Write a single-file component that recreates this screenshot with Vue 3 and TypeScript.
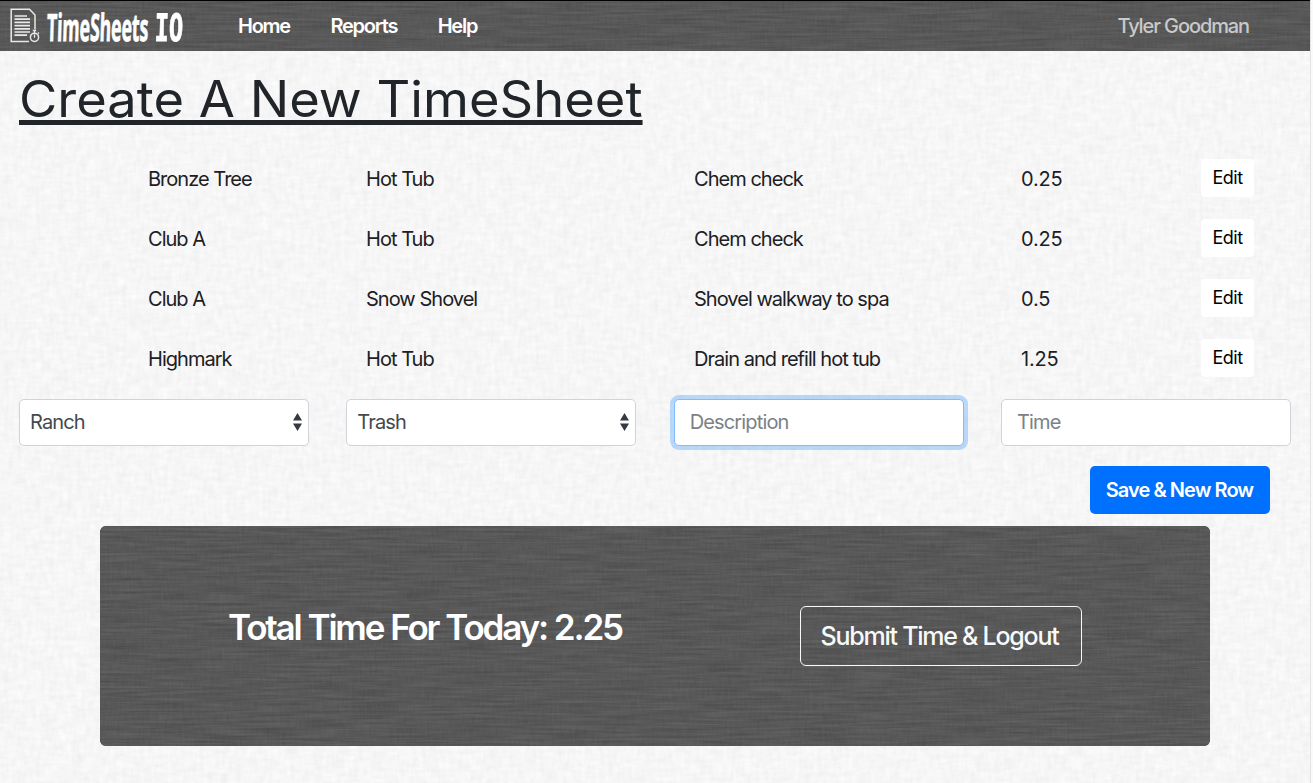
<script setup lang="ts">
interface Entry {
  place: string
  task: string
  description: string
  hours: string
}

const links: string[] = ['Home', 'Reports', 'Help']

const entries: Entry[] = [
  { place: 'Bronze Tree', task: 'Hot Tub', description: 'Chem check', hours: '0.25' },
  { place: 'Club A', task: 'Hot Tub', description: 'Chem check', hours: '0.25' },
  { place: 'Club A', task: 'Snow Shovel', description: 'Shovel walkway to spa', hours: '0.5' },
  { place: 'Highmark', task: 'Hot Tub', description: 'Drain and refill hot tub', hours: '1.25' },
]
</script>

<template>
  <div class="page">
    <svg class="texture" aria-hidden="true">
      <filter id="paper" x="0" y="0" width="100%" height="100%" color-interpolation-filters="sRGB">
        <feTurbulence type="fractalNoise" baseFrequency="0.07 0.22" numOctaves="2" seed="4" result="h" />
        <feTurbulence type="fractalNoise" baseFrequency="0.22 0.07" numOctaves="2" seed="9" result="v" />
        <feComposite in="h" in2="v" operator="arithmetic" k2="0.5" k3="0.5" />
        <feColorMatrix values="0.09 0 0 0 0.919  0.09 0 0 0 0.919  0.09 0 0 0 0.919  0 0 0 0 1" />
      </filter>
      <filter id="linen" x="0" y="0" width="100%" height="100%" color-interpolation-filters="sRGB">
        <feTurbulence type="fractalNoise" baseFrequency="0.02 0.4" numOctaves="3" seed="2" result="h" />
        <feTurbulence type="fractalNoise" baseFrequency="0.4 0.08" numOctaves="2" seed="6" result="v" />
        <feComposite in="h" in2="v" operator="arithmetic" k2="0.75" k3="0.25" />
        <feColorMatrix values="0.14 0 0 0 0.275  0.14 0 0 0 0.275  0.14 0 0 0 0.275  0 0 0 0 1" />
      </filter>
      <rect width="100%" height="100%" filter="url(#paper)" />
    </svg>

    <header class="navbar">
      <svg class="texture" aria-hidden="true">
        <rect width="100%" height="100%" filter="url(#linen)" />
      </svg>
      <a class="brand">
        <svg class="brand-icon" viewBox="0 0 30 36" fill="none" stroke="#e8e8e8">
          <path d="M19 33.5H1.2V1.2H19.5L25 7V21.5" stroke-width="1.5" />
          <path d="M4.5 8H17M4.5 11.2H20M4.5 14.4H20M4.5 17.6H20M4.5 20.8H20M4.5 24H20M4.5 27.2H17" stroke-width="1.7" />
          <circle cx="24.5" cy="29.3" r="4.1" stroke-width="1.5" />
          <path d="M24.5 29.8V26.5M24.5 25V22.5M22.8 22.5H26.2M28 25.5L29 24.5" stroke-width="1.3" />
        </svg>
        <span class="brand-name"><span class="brand-text">TimeSheets <span class="brand-suffix">IO</span></span></span>
      </a>
      <nav class="links">
        <a v-for="link in links" :key="link">{{ link }}</a>
      </nav>
      <span class="user">Tyler Goodman</span>
    </header>

    <main class="content">
      <h1><span class="title">Create A New TimeSheet</span></h1>

      <section class="entries">
        <div v-for="(entry, i) in entries" :key="i" class="entry">
          <span>{{ entry.place }}</span>
          <span>{{ entry.task }}</span>
          <span>{{ entry.description }}</span>
          <span class="hours">{{ entry.hours }}</span>
          <button type="button" class="edit">Edit</button>
        </div>
      </section>

      <form class="fields" @submit.prevent>
        <div v-for="choice in ['Ranch', 'Trash']" :key="choice" class="field select">
          <span>{{ choice }}</span>
          <svg class="arrows" width="9" height="18" viewBox="0 0 9 18" fill="#343a40">
            <path d="M4.5 0L9 7.5H0ZM4.5 18L0 10.5H9Z" />
          </svg>
        </div>
        <input class="field input focused" placeholder="Description" />
        <input class="field input" placeholder="Time" />
      </form>

      <div class="actions">
        <button type="button" class="save">Save &amp; New Row</button>
      </div>

      <section class="summary">
        <svg class="texture" aria-hidden="true">
          <rect width="100%" height="100%" filter="url(#linen)" />
        </svg>
        <h2>Total Time For Today: 2.25</h2>
        <button type="button" class="submit">Submit Time &amp; Logout</button>
      </section>
    </main>
  </div>
</template>

<style>
body {
  margin: 0;
  background: #fafafa;
  overflow: hidden;
}
</style>

<style scoped>
* {
  box-sizing: border-box;
}

.page {
  position: relative;
  width: 1311px;
  height: 783px;
  border-right: 1px solid #e4e4e4;
  overflow: hidden;
  isolation: isolate;
  background: #f6f6f6;
  color: #212529;
  font-family: Inter, "Liberation Sans", sans-serif;
  font-size: 20px;
}

.texture {
  position: absolute;
  inset: 0;
  z-index: -1;
  width: 100%;
  height: 100%;
}

button,
input {
  margin: 0;
  font-family: inherit;
}

.navbar {
  position: relative;
  isolation: isolate;
  display: flex;
  align-items: center;
  height: 51px;
  padding: 0 60px 0 10px;
  border-top: 1px solid #000;
  background: #585858;
  color: #fff;
}

.brand {
  display: flex;
  align-items: center;
  width: 228px;
}

.brand-icon {
  width: 30px;
  height: 36px;
}

.brand-name {
  margin-left: 7px;
  width: 134px;
  white-space: nowrap;
}

.brand-text {
  display: inline-block;
  transform: translateY(1px) scale(0.605, 1.3) skewX(-4deg);
  transform-origin: 0 50%;
  font-family: "Open Sans", sans-serif;
  font-size: 29px;
  font-weight: 700;
  line-height: 36px;
  -webkit-text-stroke: 0.7px #fff;
}

.brand-suffix {
  display: inline-block;
  margin-left: 3px;
  font-family: "DejaVu Sans Mono", monospace;
  font-size: 29px;
  line-height: 36px;
  transform: scaleX(1.35);
  transform-origin: 0 50%;
}

.links {
  display: flex;
  flex: 1;
  gap: 40.5px;
  font-weight: 600;
  letter-spacing: -1.25px;
}

.user {
  color: #c9c9c9;
  font-weight: 500;
  letter-spacing: -1.1px;
  margin-right: 1px;
}

.content {
  padding: 0 19px;
}

h1 {
  height: 98px;
  margin: 0;
  padding-top: 18px;
  font-size: 50px;
  font-weight: 400;
  line-height: 60px;
  white-space: nowrap;
}

.title {
  display: inline-block;
  transform: scaleX(1.049);
  transform-origin: 0 50%;
  text-decoration: underline;
  text-decoration-thickness: 5px;
  text-underline-offset: 3px;
  text-decoration-skip-ink: none;
}

.entry {
  display: grid;
  grid-template-columns: 218px 328px 327px 180px 53px;
  align-items: center;
  height: 60px;
  padding-left: 129px;
  color: #1c2024;
  letter-spacing: -0.97px;
}

.hours {
  letter-spacing: -0.2px;
}

.edit {
  height: 38px;
  margin-top: -2px;
  padding: 0 0 1px;
  border: 0;
  border-radius: 4px;
  background: #fff;
  color: #000;
  font-size: 18px;
  letter-spacing: -0.5px;
}

.fields {
  display: grid;
  grid-template-columns: repeat(4, 290px);
  column-gap: 37.33px;
  margin-top: 10px;
}

.field {
  height: 47px;
  border: 1px solid #ced4da;
  border-radius: 5px;
  background: #fff;
  font-size: 20px;
  letter-spacing: -0.85px;
}

.select {
  display: flex;
  align-items: center;
  justify-content: space-between;
  padding: 0 6px 2px 10px;
  color: #42494f;
}

.arrows {
  margin-top: 1px;
}

.input {
  width: 290px;
  padding: 0 15px 2px;
  outline: 0;
}

.input::placeholder {
  color: #7c8187;
  opacity: 1;
}

.focused {
  border-color: #80bdff;
  box-shadow: 0 0 0 4px rgba(0, 123, 255, 0.25);
}

.actions {
  display: flex;
  justify-content: flex-end;
  padding: 20px 21px 12px 0;
}

.save {
  width: 180px;
  height: 48px;
  padding: 0 1px 0 0;
  border: 0;
  border-radius: 5px;
  background: #0070ff;
  color: #fff;
  font-size: 20px;
  font-weight: 600;
  letter-spacing: -0.95px;
}

.summary {
  position: relative;
  isolation: isolate;
  display: flex;
  width: 1110px;
  height: 220px;
  margin-left: 81px;
  overflow: hidden;
  border-radius: 6px;
  background: #585858;
  color: #fff;
}

h2 {
  width: 572px;
  margin: 79px 0 0 128px;
  font-size: 35px;
  font-weight: 600;
  line-height: 44px;
  letter-spacing: -2.2px;
  word-spacing: 0.4px;
}

.submit {
  width: 282px;
  height: 60px;
  margin-top: 80px;
  padding: 0 3px 0 0;
  border: 1px solid #f8f9fa;
  border-radius: 6px;
  background: transparent;
  color: #f8f9fa;
  font-size: 25px;
  font-weight: 500;
  letter-spacing: -1.25px;
}
</style>
